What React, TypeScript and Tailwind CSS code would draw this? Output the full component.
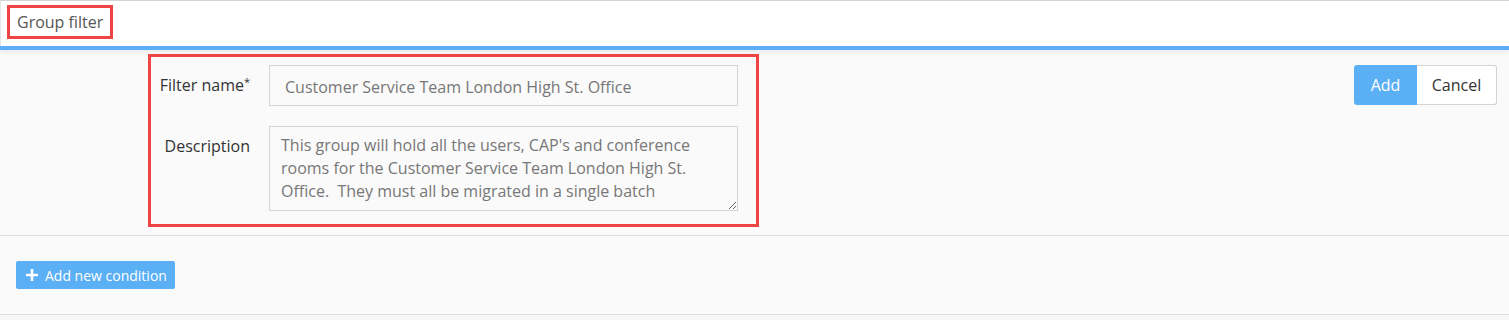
import React from 'react';

export default function App() {
  return (
    <div className="w-[1509px] h-[320px] bg-white font-['Open_Sans',sans-serif] overflow-hidden">
      {/* header */}
      <div className="border-t border-[#d4d4d4] border-l border-l-[#e4e4e4] bg-white h-[46px] flex items-start pt-[4px] pl-[6px]">
        <div className="border-[3px] border-[#f04444] h-[34px] px-[7px] flex items-center text-[16px] text-[#555]">
          Group filter
        </div>
      </div>
      <div className="h-[4px] bg-[#5aaff5] shadow-[0_2px_4px_rgba(0,0,0,0.08)] relative" />

      {/* form section */}
      <div className="bg-[#fafafa] border-b border-[#dedede] h-[186px] flex justify-between pt-[4px] pl-[148px] pr-[12px]">
        <div className="border-[3px] border-[#f04444] w-[611px] h-[173px] flex pt-[8px] pl-[7px] pr-[17px]">
          <div className="flex flex-col">
            <div className="flex items-center">
              <label className="w-[94px] text-right text-[16px] text-[#333] -mt-[2px] pr-[2px]">
                Filter name<sup className="text-[11px] relative -top-[5px]">*</sup>
              </label>
              <input
                readOnly
                value="Customer Service Team London High St. Office"
                className="ml-[17px] w-[469px] h-[41px] border border-[#d4d4d4] bg-[#fafafa] px-[15px] pt-[2px] text-[16px] text-[#777] outline-none"
              />
            </div>
            <div className="flex items-start mt-[20px]">
              <label className="w-[92px] text-right text-[16px] text-[#333] pt-[8px]">Description</label>
              <textarea
                readOnly
                value={"This group will hold all the users, CAP's and conference rooms for the Customer Service Team London High St. Office.  They must all be migrated in a single batch"}
                className="ml-[19px] w-[469px] h-[85px] border border-[#d4d4d4] bg-[#fafafa] px-[11px] pt-[7px] text-[16px] leading-[23px] text-[#777] outline-none resize-y"
              />
            </div>
          </div>
        </div>
        <div className="flex mt-[11px] h-[40px]">
          <button className="w-[63px] bg-[#5aaff5] text-white text-[16px] rounded-l-[3px]">Add</button>
          <button className="w-[80px] bg-white border border-[#d4d4d4] border-l-0 text-[#333] text-[16px] rounded-r-[3px]">Cancel</button>
        </div>
      </div>

      {/* conditions section */}
      <div className="bg-[#fafafa] border-b border-[#dedede] h-[79px] pt-[25px] pl-[16px]">
        <button className="h-[28px] w-[159px] bg-[#5aaff5] text-white text-[14px] rounded-[2px] flex items-center pl-[9px] gap-[6px]">
          <svg width="14" height="14" viewBox="0 0 14 14">
            <path d="M7 1v12M1 7h12" stroke="white" strokeWidth="2.6" />
          </svg>
          Add new condition
        </button>
      </div>
      <div className="bg-[#f7f7f7] h-[6px]" />
    </div>
  );
}
